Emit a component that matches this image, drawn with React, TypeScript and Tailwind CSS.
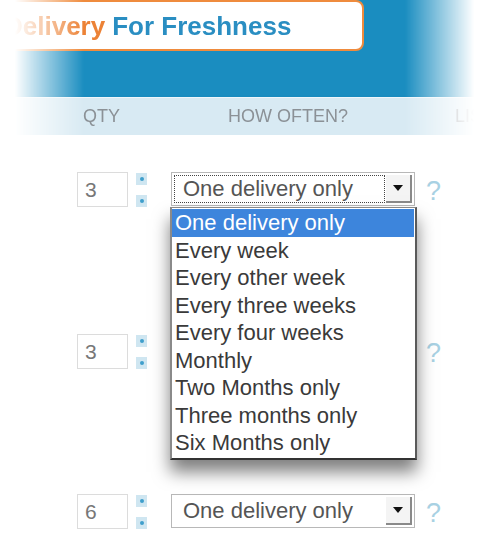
import React from 'react';

const options = [
  "One delivery only",
  "Every week",
  "Every other week",
  "Every three weeks",
  "Every four weeks",
  "Monthly",
  "Two Months only",
  "Three months only",
  "Six Months only",
];

const headerFade =
  "[mask-image:linear-gradient(to_right,transparent_0%,transparent_3%,black_17%,black_82%,transparent_96%)] [-webkit-mask-image:linear-gradient(to_right,transparent_0%,transparent_3%,black_17%,black_82%,transparent_96%)]";

function Spinner() {
  return (
    <div className="ml-[8px] flex h-[35px] flex-col justify-between pt-[1px]">
      <div className="flex h-[12px] w-[11px] items-center justify-center bg-[#cfe6f1]">
        <div className="h-[4px] w-[4px] rounded-full bg-[#3f9fcc]" />
      </div>
      <div className="flex h-[12px] w-[11px] items-center justify-center bg-[#cfe6f1]">
        <div className="h-[4px] w-[4px] rounded-full bg-[#3f9fcc]" />
      </div>
    </div>
  );
}

function DeliverySelect({ focused }: { focused?: boolean }) {
  return (
    <div className="ml-[24px] flex h-[34px] w-[244px] border border-[#b8b8b8] bg-white p-[2px]">
      <div
        className={
          "flex flex-1 items-center pl-[8px] text-[22px] leading-none text-[#555] " +
          (focused ? "border border-dotted border-[#444]" : "border border-transparent")
        }
      >
        One delivery only
      </div>
      <div className="ml-[1px] flex w-[26px] items-center justify-center border-b-2 border-r-2 border-[#8a8a8a] bg-[#f4f4f4]">
        <svg width="10" height="6" viewBox="0 0 10 6">
          <path d="M0 0H10L5 6Z" fill="#111" />
        </svg>
      </div>
    </div>
  );
}

function Row({ qty, focused, className }: { qty: string; focused?: boolean; className: string }) {
  return (
    <div className={"flex items-start " + className}>
      <div className="ml-[77px] flex h-[35px] w-[51px] items-center border border-[#dcdcdc] bg-white pl-[7px] text-[21px] text-[#777]">
        {qty}
      </div>
      <Spinner />
      <DeliverySelect focused={focused} />
      <div className="ml-[11px] mt-[4px] text-[27px] leading-[30px] text-[#a8d1e3]">?</div>
    </div>
  );
}

export default function App() {
  return (
    <div className="relative h-[534px] w-[494px] overflow-hidden bg-white font-[family-name:'Liberation_Sans',Arial,sans-serif]">
      <div className={headerFade}>
        <div className="h-[97px] bg-[#1a8dc0]">
          <div className="-ml-[20px] flex h-[51px] w-[384px] items-center rounded-[8px] border-2 border-[#ef8b3d] bg-white pl-[22px] text-[26px] font-bold leading-none">
            <span className="text-[#ec8236]">Delivery</span>
            <span className="ml-[7px] text-[#2a8ec2]">For Freshness</span>
          </div>
        </div>
        <div className="flex h-[38px] items-center border-t border-[#eef6fa] bg-[#d8eaf3] text-[18px] text-[#8b9196] shadow-[0_6px_8px_rgba(0,0,0,0.14)]">
          <span className="ml-[83px]">QTY</span>
          <span className="ml-[108px]">HOW OFTEN?</span>
          <span className="ml-[107px]">LIST</span>
        </div>
      </div>

      <div className="pt-[37px]">
        <Row qty="3" focused className="h-[162px]" />
        <Row qty="3" className="h-[160px]" />
        <Row qty="6" className="h-[40px]" />
      </div>

      <div className="absolute left-[170px] top-[207px] w-[247px] border-b-2 border-l-2 border-r-2 border-t border-b-[#333] border-l-[#8a8a8a] border-r-[#5a5a5a] border-t-[#888] bg-white py-[1px] pr-[1px] text-[22px] leading-[27.5px] text-[#3a3a3a] shadow-[0_12px_16px_rgba(0,0,0,0.5)]">
        {options.map((o, i) => (
          <div key={o} className={"pl-[3px] " + (i === 0 ? "bg-[#3d85dc] text-white" : "")}>
            {o}
          </div>
        ))}
      </div>
    </div>
  );
}
